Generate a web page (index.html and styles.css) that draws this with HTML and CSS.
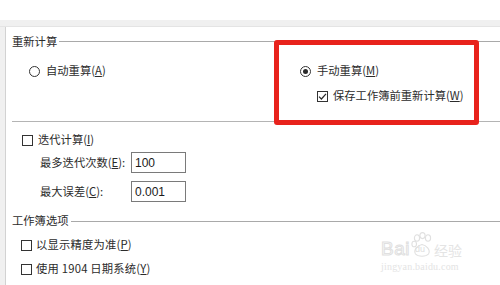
FILE: index.html
```html
<!DOCTYPE html>
<html lang="zh-CN">
<head>
<meta charset="utf-8">
<title>公式 - 计算选项</title>
<link rel="stylesheet" href="styles.css">
</head>
<body>
<div class="page">
  <div class="top-space"></div>
  <div class="band"></div>
  <div class="main">
    <div class="left-strip"></div>
    <div class="panel">
      <div class="group-title g1"><span class="gt-text">重新计算</span><span class="gt-line"></span></div>
      <div class="calc-grid">
        <div class="opt radio-opt">
          <span class="radio"></span><span class="lbl">自动重算(<u>A</u>)</span>
        </div>
        <div class="opt radio-opt">
          <span class="radio on"></span><span class="lbl">手动重算(<u>M</u>)</span>
        </div>
        <div></div>
        <div class="opt sub-opt">
          <span class="check on"><svg viewBox="0 0 11 11" width="11" height="11"><path d="M2 5.6 L4.4 8 L9 2.8" fill="none" stroke="#2a2a2a" stroke-width="1.2"/></svg></span><span class="lbl">保存工作簿前重新计算(<u>W</u>)</span>
        </div>
      </div>
      <div class="sep"></div>
      <div class="opt iter-row">
        <span class="check"></span><span class="lbl">迭代计算(<u>I</u>)</span>
      </div>
      <div class="field-row f1">
        <span class="field-lbl">最多迭代次数(<u>E</u>):</span><span class="input">100</span>
      </div>
      <div class="field-row f2">
        <span class="field-lbl">最大误差(<u>C</u>):</span><span class="input">0.001</span>
      </div>
      <div class="group-title g2"><span class="gt-text">工作簿选项</span><span class="gt-line"></span></div>
      <div class="opt wb-row first">
        <span class="check"></span><span class="lbl">以显示精度为准(<u>P</u>)</span>
      </div>
      <div class="opt wb-row">
        <span class="check"></span><span class="lbl">使用 1904 日期系统(<u>Y</u>)</span>
      </div>
    </div>
  </div>
  <div class="highlight"></div>
  <div class="watermark">
    <div class="wm-top">
      <span class="wm-bai">Bai</span>
      <span class="wm-paw">
        <svg viewBox="0 0 22 26" width="22" height="26">
          <g fill="none" stroke="#e0e0e0" stroke-width="1.1">
            <ellipse cx="6" cy="6" rx="2.6" ry="3.2"/>
            <ellipse cx="11.5" cy="3.6" rx="2.6" ry="3"/>
            <ellipse cx="17" cy="6" rx="2.6" ry="3.2"/>
            <ellipse cx="3.2" cy="12" rx="2.3" ry="2.8"/>
            <path d="M4.5 22 C2 18 7 13 11 12.5 C15 13 20 18 17.5 22 C15 25 7 25 4.5 22 Z"/>
          </g>
        </svg>
        <span class="wm-du">du</span>
      </span>
      <span class="wm-jy">经验</span>
    </div>
    <div class="wm-url">jingyan.baidu.com</div>
  </div>
</div>
</body>
</html>
```

FILE: styles.css
```css
* { box-sizing: border-box; }
html, body { margin: 0; padding: 0; }
body {
  width: 500px;
  height: 285px;
  overflow: hidden;
  background: #ffffff;
  font-family: "Noto Sans CJK SC", "Microsoft YaHei", sans-serif;
  font-size: 11.3px;
  color: #2b2b2b;
}
.page { position: relative; width: 500px; height: 285px; }
.top-space { height: 20px; background: #ffffff; }
.band { height: 7px; background: #f0f0f0; border-bottom: 1px solid #e4e4e4; }
.main { display: flex; height: 258px; }
.left-strip { width: 6px; background: #f0f0f0; border-right: 1px solid #d2d2d2; }
.panel { flex: 1; padding-left: 6px; background: #ffffff; }

u { text-decoration: underline; text-underline-offset: 1px; }

.group-title { display: flex; align-items: center; }
.group-title.g1 { height: 29px; }
.group-title.g2 { height: 20px; margin-top: 9px; }
.gt-text { line-height: 1; white-space: nowrap; }
.gt-line { flex: 1; height: 1px; background: #a9a9a9; margin-left: 2px; }

.opt { display: flex; align-items: center; white-space: nowrap; }
.lbl { line-height: 1; }

.calc-grid {
  display: grid;
  grid-template-columns: 271px 1fr;
  grid-template-rows: 28px 22px;
  padding-left: 17px;
  margin-top: 1px;
}
.radio {
  width: 11px; height: 11px;
  border: 1px solid #333333;
  border-radius: 50%;
  margin-right: 6px;
  display: flex; align-items: center; justify-content: center;
  flex: none;
}
.radio.on::after {
  content: "";
  width: 5px; height: 5px;
  border-radius: 50%;
  background: #2a2a2a;
}
.check {
  width: 11px; height: 11px;
  border: 1px solid #333333;
  background: #ffffff;
  flex: none;
  display: flex; align-items: center; justify-content: center;
}
.check svg { display: block; margin: -1px; }
.sub-opt { padding-left: 17px; }
.sub-opt .check { margin-right: 5px; }

.sep { height: 1px; background: #b4b4b4; margin-top: 14px; }

.iter-row { height: 22px; margin-top: 7px; padding-left: 10px; }
.iter-row .check { margin-right: 5px; }

.field-row { display: flex; align-items: center; padding-left: 28px; height: 21px; }
.field-row.f1 { margin-top: 1px; }
.field-row.f2 { margin-top: 8px; }
.field-lbl { width: 91px; line-height: 1; white-space: nowrap; }
.input {
  width: 55px; height: 21px;
  border: 1px solid #7a7a7a;
  background: #ffffff;
  padding-left: 3px;
  display: flex; align-items: center;
  font-family: "Liberation Sans", Arial, sans-serif;
  font-size: 12px;
  color: #1a1a1a;
}

.wb-row { height: 24px; padding-left: 9px; }
.wb-row.first { margin-top: 2px; }
.wb-row .check { margin-right: 4px; }
.wb-row .lbl { letter-spacing: 0.2px; }

.highlight {
  position: absolute;
  left: 274px; top: 40px;
  width: 205px; height: 85px;
  border: 5px solid #e8221c;
  border-radius: 3px;
}

.watermark {
  position: absolute;
  left: 381px; top: 230px;
  color: #e4e4e4;
}
.wm-top { display: flex; align-items: flex-end; height: 28px; }
.wm-bai {
  font-family: "Liberation Sans", Arial, sans-serif;
  font-size: 19px;
  line-height: 1;
  color: #ffffff;
  -webkit-text-stroke: 1px #e0e0e0;
  letter-spacing: 0.5px;
}
.wm-paw { position: relative; width: 22px; height: 26px; margin: 0 1px; }
.wm-paw svg { display: block; }
.wm-du {
  position: absolute; left: 4px; top: 13px;
  font-family: "Liberation Sans", Arial, sans-serif;
  font-size: 9px; line-height: 1;
  color: #dedede;
}
.wm-jy { font-size: 14px; line-height: 1; color: #e4e4e4; margin-bottom: 1px; }
.wm-url {
  font-family: "Liberation Serif", serif;
  font-size: 10px;
  color: #e4e4e4;
  margin-top: 3px;
  letter-spacing: 0.2px;
}
```
